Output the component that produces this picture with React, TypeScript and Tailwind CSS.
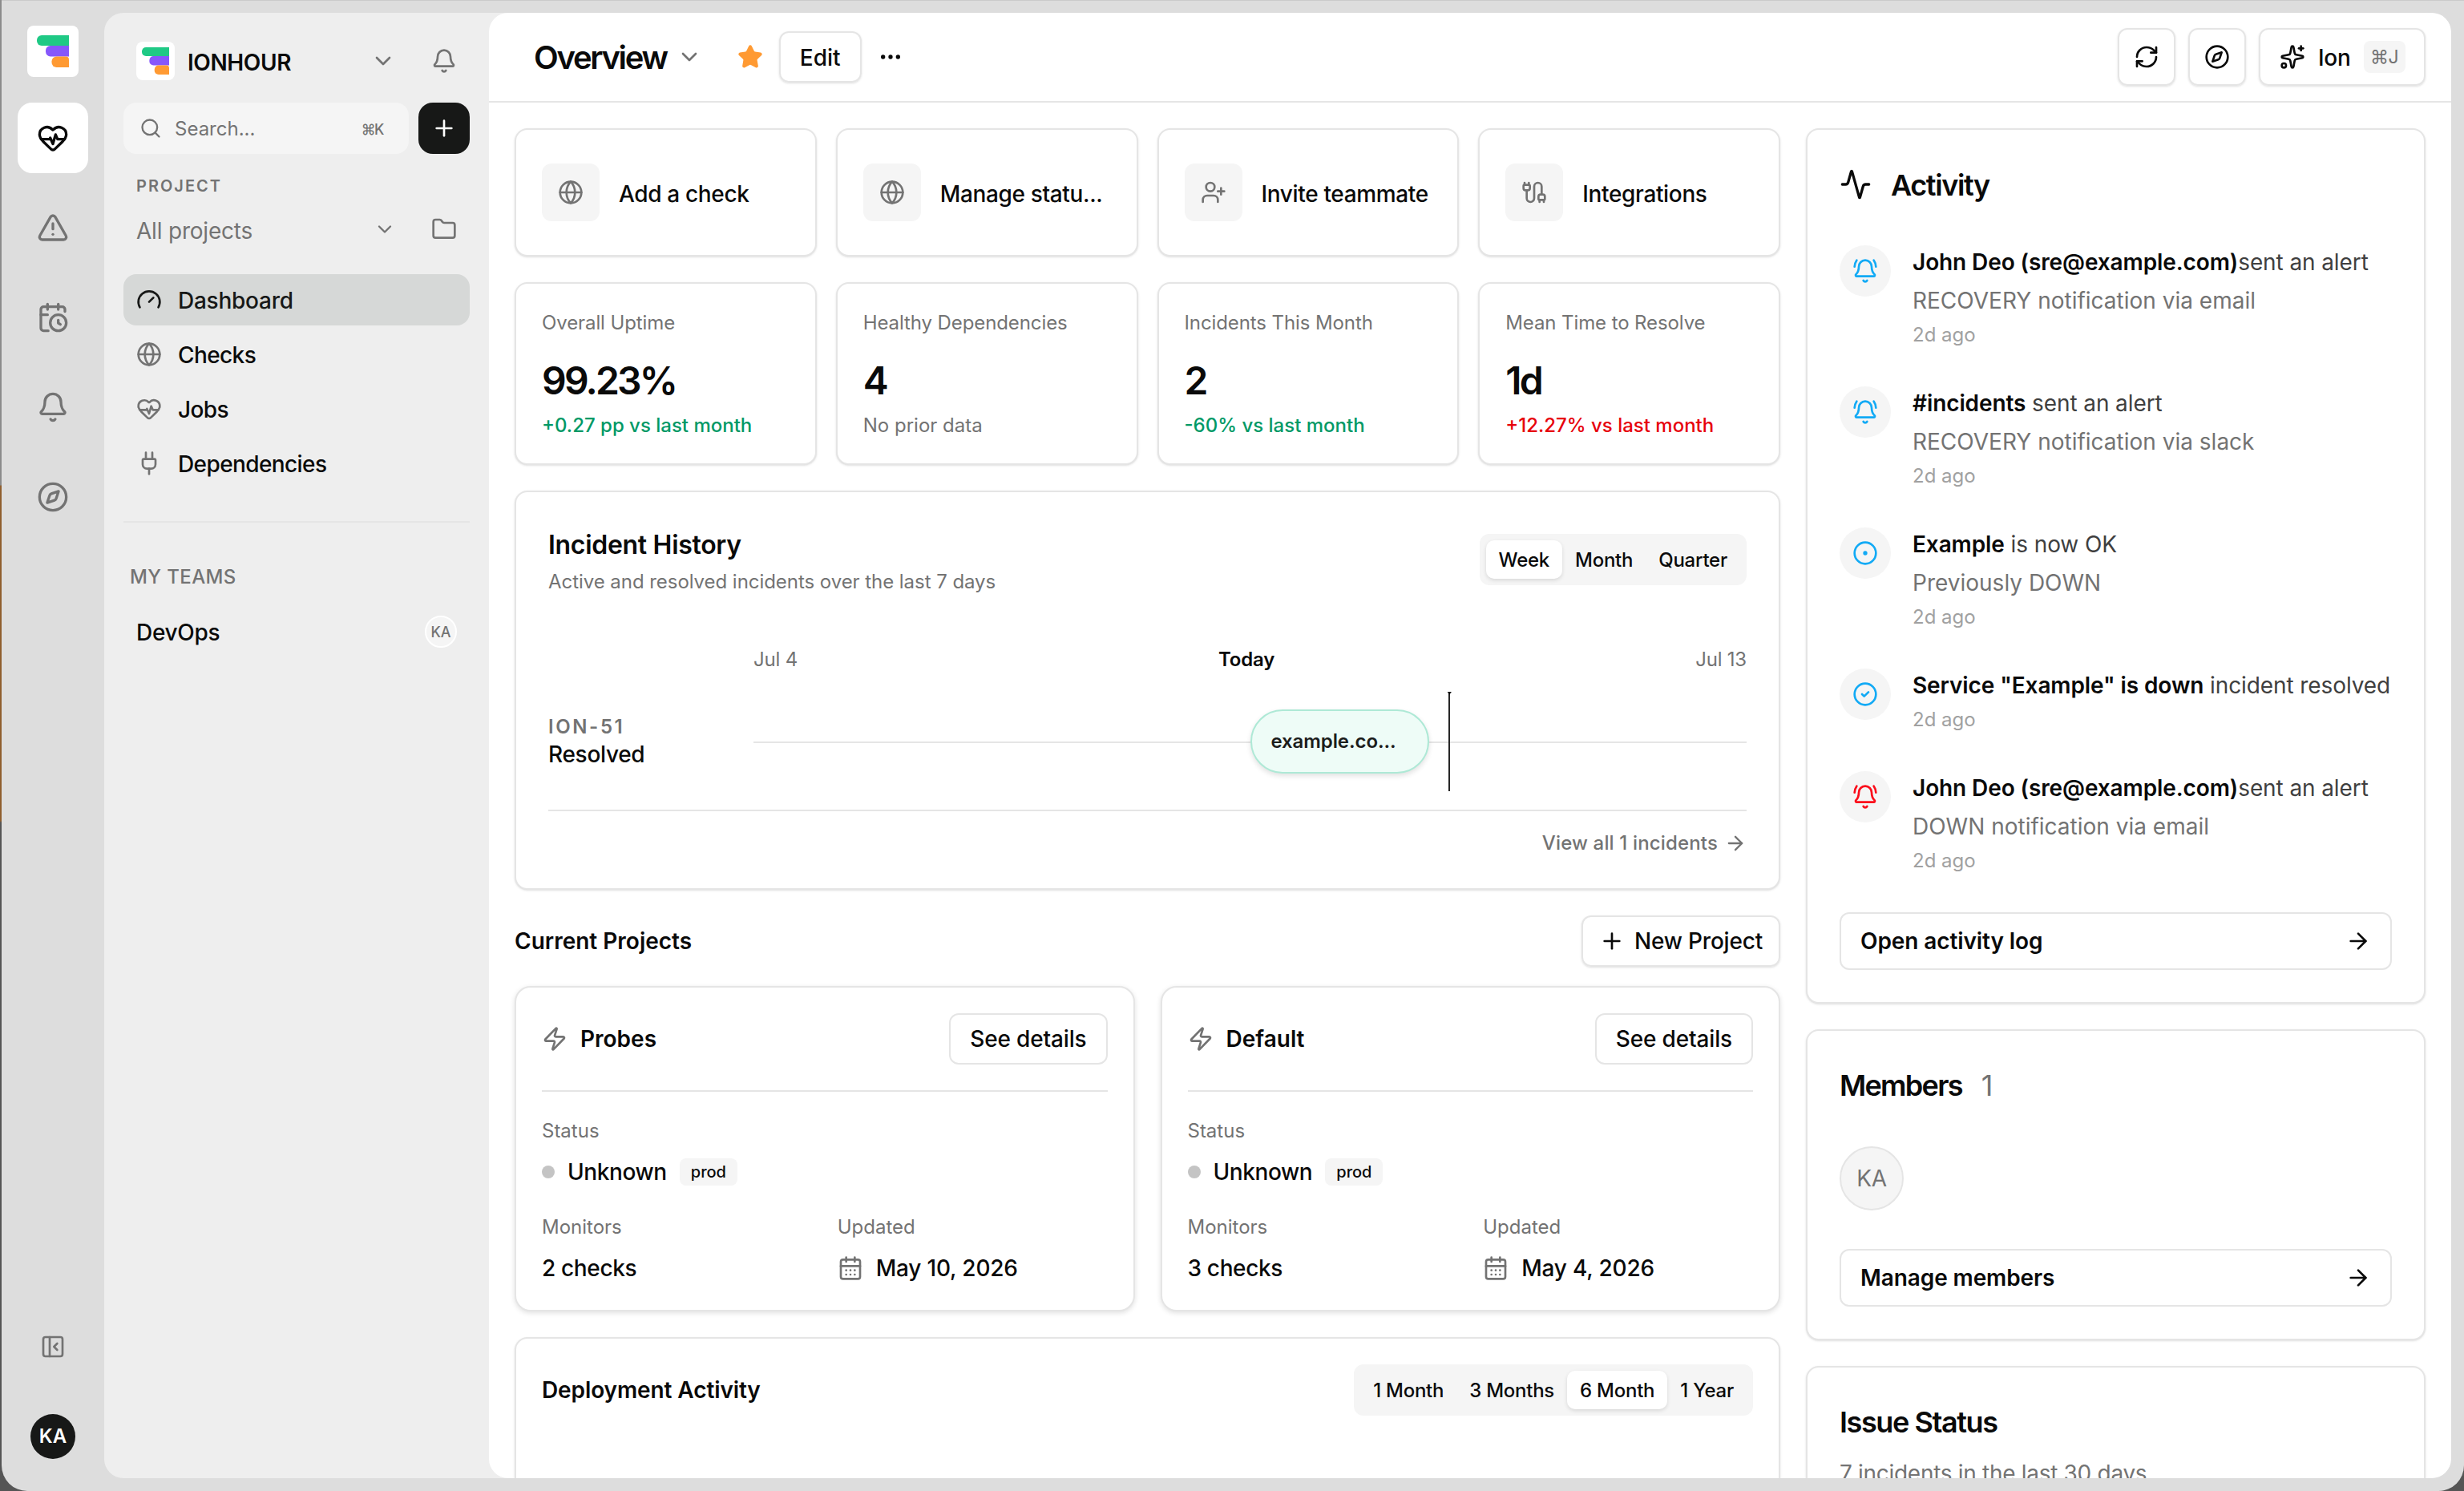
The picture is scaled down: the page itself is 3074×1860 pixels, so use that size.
import React from 'react';
import {
  Activity,
  ArrowRight,
  Bell,
  BellRing,
  Cable,
  CalendarClock,
  CalendarDays,
  ChevronDown,
  CircleCheck,
  CircleDot,
  Compass,
  Ellipsis,
  Folder,
  Gauge,
  Globe,
  HeartPulse,
  PanelLeftClose,
  Plug,
  Plus,
  RefreshCw,
  Search,
  Sparkles,
  Star,
  TriangleAlert,
  UserPlus,
  Zap,
  type LucideIcon,
} from 'lucide-react';

const Logo: React.FC<{ className: string }> = ({ className }) => (
  <svg className={className} viewBox="0 0 40 40">
    <path d="M6 0H40V13H6A6 6 0 0 1 0 7V6A6 6 0 0 1 6 0Z" fill="#1fc985" />
    <path d="M17 13H40V26.5H17A6 6 0 0 1 11 20.5V19A6 6 0 0 1 17 13Z" fill="#8657fb" />
    <path d="M24.500 26.500H36A4 4 0 0 1 40 30.500V40H24.500A6 6 0 0 1 18.500 34V32.500A6 6 0 0 1 24.500 26.500Z" fill="#ff9a33" />
  </svg>
);

// Narrow icon rail on the far left
const railIcons: LucideIcon[] = [TriangleAlert, CalendarClock, Bell, Compass];

const Rail: React.FC = () => (
  <nav className="flex w-[128px] shrink-0 flex-col items-center pt-[31px] pb-10">
    <div className="flex size-16 items-center justify-center rounded-lg bg-white">
      <Logo className="size-10" />
    </div>
    <div className="mt-8 flex flex-col gap-6">
      <div className="flex size-[88px] items-center justify-center rounded-[18px] bg-white">
        <HeartPulse className="size-10 text-neutral-950" />
      </div>
      {railIcons.map((Icon, i) => (
        <div key={i} className="flex size-[88px] items-center justify-center">
          <Icon className="size-10 text-[#737373]" />
        </div>
      ))}
    </div>
    <PanelLeftClose className="mt-auto size-8 text-[#737373]" />
    <div className="mt-[68px] flex size-14 items-center justify-center rounded-full bg-[#171817] text-[24px] font-semibold text-white">
      KA
    </div>
  </nav>
);

const navItems: { label: string; icon: LucideIcon; active?: boolean }[] = [
  { label: 'Dashboard', icon: Gauge, active: true },
  { label: 'Checks', icon: Globe },
  { label: 'Jobs', icon: HeartPulse },
  { label: 'Dependencies', icon: Plug },
];

const Sidebar: React.FC = () => (
  <aside className="w-[480px] shrink-0 px-6">
    <div className="mt-9 flex h-12 items-center pl-4 pr-4">
      <div className="flex size-12 items-center justify-center rounded-lg bg-white">
        <Logo className="size-[34px]" />
      </div>
      <span className="ml-4 pt-[3px] text-[28px] font-semibold tracking-[-0.4px] text-neutral-950">IONHOUR</span>
      <ChevronDown className="ml-auto size-8 text-[#737373]" />
      <Bell className="ml-11 size-8 text-[#737373]" />
    </div>

    <div className="mt-7 flex gap-3">
      <div className="flex h-16 flex-1 items-center rounded-2xl bg-neutral-100 pl-5 pr-8 text-[#737373]">
        <Search className="size-7" />
        <span className="ml-4 pt-[2px] text-[24px]">Search...</span>
        <span className="ml-auto pt-[2px] text-[18px] font-medium tracking-[-1.5px]">⌘K</span>
      </div>
      <button className="flex size-16 items-center justify-center rounded-[18px] bg-[#171817]">
        <Plus className="size-8 text-white" />
      </button>
    </div>

    <div className="mt-6 pl-4 text-[20px] leading-8 font-semibold tracking-[2px] text-[#737373]">PROJECT</div>
    <div className="mt-[14px] flex h-12 items-center pl-4 pr-4">
      <span className="pt-[3px] text-[28px] tracking-[-0.2px] text-[#737373]">All projects</span>
      <ChevronDown className="ml-auto size-7 text-[#737373]" />
      <Folder className="ml-11 size-8 text-[#737373]" />
    </div>

    <div className="mt-8 flex flex-col gap-1">
      {navItems.map(({ label, icon: Icon, active }) => (
        <div
          key={label}
          className={`flex h-16 items-center gap-5 rounded-2xl pl-4 text-[28px] font-medium ${
            active ? 'bg-[#d6d8d7] tracking-[-0.25px] text-[#171817]' : 'tracking-[-0.6px] text-neutral-950'
          }`}
        >
          <Icon className={active ? 'size-8' : 'size-8 text-[#737373]'} />
          <span className="pt-[2px]">{label}</span>
        </div>
      ))}
    </div>

    <div className="mt-10 h-[2px] bg-neutral-200" />

    <div className="mt-[52px] pl-2 text-[24px] leading-8 font-medium tracking-[0.4px] text-[#737373]">MY TEAMS</div>
    <div className="mt-7 flex h-12 items-center justify-between pl-4 pr-4">
      <span className="pt-[2px] text-[28px] font-medium tracking-[-0.3px] text-neutral-950">DevOps</span>
      <div className="flex size-10 items-center justify-center rounded-full border-2 border-white bg-neutral-100 text-[18px] font-medium text-[#737373]">
        KA
      </div>
    </div>
  </aside>
);

const Header: React.FC = () => (
  <header className="flex h-[112px] shrink-0 items-center border-b-2 border-neutral-200 pl-14 pr-8 text-neutral-950">
    <h1 className="pt-[2px] text-[40px] font-semibold tracking-[-2.3px]">Overview</h1>
    <ChevronDown className="ml-3 size-8 text-[#737373]" />
    <Star className="ml-11 size-8 fill-[#ff9a33] text-[#ff9a33]" />
    <button className="ml-5 h-16 rounded-xl border-2 border-neutral-200 px-6 pt-[2px] text-[28px] font-medium shadow-sm">
      Edit
    </button>
    <Ellipsis className="ml-5 size-8" />
    <div className="ml-auto flex gap-4">
      <button className="flex size-[72px] items-center justify-center rounded-xl border-2 border-neutral-200 shadow-sm">
        <RefreshCw className="size-8" />
      </button>
      <button className="flex size-[72px] items-center justify-center rounded-xl border-2 border-neutral-200 shadow-sm">
        <Compass className="size-8" />
      </button>
      <button className="flex h-[72px] w-[208px] items-center rounded-xl border-2 border-neutral-200 pl-6 shadow-sm">
        <Sparkles className="size-8" />
        <span className="ml-4 pt-[2px] text-[28px] font-medium tracking-[-0.3px]">Ion</span>
        <span className="ml-4 flex h-10 w-[52px] items-center justify-center rounded-lg bg-neutral-100 text-[23px] tracking-[-0.5px] text-[#737373]">
          ⌘J
        </span>
      </button>
    </div>
  </header>
);

const Card: React.FC<{ className?: string; children: React.ReactNode }> = ({ className = '', children }) => (
  <section className={`rounded-2xl border-2 border-neutral-200 bg-white shadow-sm ${className}`}>{children}</section>
);

const quickActions: { label: string; icon: LucideIcon }[] = [
  { label: 'Add a check', icon: Globe },
  { label: 'Manage statu...', icon: Globe },
  { label: 'Invite teammate', icon: UserPlus },
  { label: 'Integrations', icon: Cable },
];

const stats = [
  { label: 'Overall Uptime', value: '99.23%', note: '+0.27 pp vs last month', tone: 'font-medium text-emerald-600' },
  { label: 'Healthy Dependencies', value: '4', note: 'No prior data', tone: 'text-[#737373]' },
  { label: 'Incidents This Month', value: '2', note: '-60% vs last month', tone: 'font-medium text-emerald-600' },
  { label: 'Mean Time to Resolve', value: '1d', note: '+12.27% vs last month', tone: 'font-medium text-red-600' },
];

const Segmented: React.FC<{ items: string[]; active: string }> = ({ items, active }) => (
  <div className="flex h-16 items-center rounded-xl bg-neutral-100 px-2 text-[24px] font-medium tracking-[-0.25px] text-neutral-950">
    {items.map((item) => (
      <div
        key={item}
        className={`flex h-12 items-center px-4 pt-px ${item === active ? 'rounded-[10px] bg-white shadow-[0_2px_5px_rgba(0,0,0,0.12)]' : ''}`}
      >
        {item}
      </div>
    ))}
  </div>
);

const IncidentHistory: React.FC = () => (
  <Card className="p-10">
    <div className="flex items-center justify-between">
      <div className="pt-[2px]">
        <h2 className="text-[32px] leading-[48px] font-semibold tracking-[-0.3px]">Incident History</h2>
        <p className="mt-[6px] text-[24px] leading-8 tracking-[-0.05px] text-[#737373]">
          Active and resolved incidents over the last 7 days
        </p>
      </div>
      <Segmented items={['Week', 'Month', 'Quarter']} active="Week" />
    </div>

    <div className="mt-[65px] flex justify-between pl-64 text-[24px] leading-8 tracking-[-0.2px] text-[#737373]">
      <span>Jul 4</span>
      <span className="font-semibold text-neutral-950">Today</span>
      <span>Jul 13</span>
    </div>

    <div className="flex h-[171px] items-center">
      <div className="w-64 shrink-0">
        <div className="text-[24px] leading-8 font-semibold tracking-[2.6px] text-[#737373]">ION-51</div>
        <div className="text-[28px] leading-9 font-medium tracking-[-0.3px]">Resolved</div>
      </div>
      {/* Timeline track with the incident pill and the "now" marker on top */}
      <div className="relative h-20 flex-1">
        <div className="absolute inset-x-0 top-10 h-[2px] bg-neutral-200" />
        <div className="absolute left-1/2 top-0 flex h-20 w-[223px] items-center rounded-full border-2 border-[#aee9d6] bg-[#eefcf7] px-6 text-[24px] font-semibold tracking-[-0.1px] text-[#1c1d1c] shadow-[0_3px_6px_rgba(0,0,0,0.12)]">
          example.co...
        </div>
        <div className="absolute -top-5 left-[70%] h-[122px] w-[2px] bg-neutral-800" />
        <div className="absolute -top-[22px] left-[70%] -ml-[2px] h-1 w-[6px] bg-neutral-950 [clip-path:polygon(0_0,100%_0,50%_100%)]" />
      </div>
    </div>

    <div className="flex items-center justify-end gap-2 border-t-2 border-neutral-200 pt-6 text-[24px] leading-8 font-medium tracking-[0.15px] text-[#737373]">
      View all 1 incidents
      <ArrowRight className="size-7" />
    </div>
  </Card>
);

const ProjectCard: React.FC<{ name: string; checks: string; updated: string }> = ({ name, checks, updated }) => (
  <section className="rounded-[20px] border-2 border-neutral-200 bg-white p-8 shadow-[0_2px_6px_rgba(0,0,0,0.12)]">
    <div className="flex items-center border-b-2 border-neutral-200 pb-8">
      <Zap className="size-8 text-[#737373]" />
      <h3 className="ml-4 text-[28px] font-semibold">{name}</h3>
      <button className="ml-auto h-16 rounded-xl border-2 border-neutral-200 px-6 text-[28px] font-medium tracking-[-0.15px]">
        See details
      </button>
    </div>
    <div className="mt-[33px] text-[24px] leading-8 text-[#737373]">Status</div>
    <div className="mt-[15px] flex h-10 items-center gap-4">
      <span className="size-4 rounded-full bg-[#c4c4c4]" />
      <span className="text-[28px] font-medium tracking-[-0.4px]">Unknown</span>
      <span className="flex h-[34px] items-center rounded-lg bg-neutral-100 px-[14px] text-[20px] font-medium">prod</span>
    </div>
    <div className="mt-[33px] grid grid-cols-2 gap-8">
      <div>
        <div className="text-[24px] leading-8 text-[#737373]">Monitors</div>
        <div className="mt-[15px] text-[28px] leading-10 font-medium tracking-[-0.35px]">{checks}</div>
      </div>
      <div>
        <div className="text-[24px] leading-8 text-[#737373]">Updated</div>
        <div className="mt-[15px] flex items-center gap-4 text-[28px] leading-10 font-medium tracking-[-0.2px]">
          <CalendarDays className="size-8 text-[#737373]" />
          {updated}
        </div>
      </div>
    </div>
  </section>
);

const feed: { icon: LucideIcon; color: string; who: string; what: string; detail?: string }[] = [
  { icon: BellRing, color: 'text-[#12aaf5]', who: 'John Deo (sre@example.com)', what: 'sent an alert', detail: 'RECOVERY notification via email' },
  { icon: BellRing, color: 'text-[#12aaf5]', who: '#incidents', what: ' sent an alert', detail: 'RECOVERY notification via slack' },
  { icon: CircleDot, color: 'text-[#12aaf5]', who: 'Example', what: ' is now OK', detail: 'Previously DOWN' },
  { icon: CircleCheck, color: 'text-[#12aaf5]', who: 'Service "Example" is down', what: ' incident resolved' },
  { icon: BellRing, color: 'text-[#fb0d1b]', who: 'John Deo (sre@example.com)', what: 'sent an alert', detail: 'DOWN notification via email' },
];

const LinkButton: React.FC<{ label: string }> = ({ label }) => (
  <button className="mt-12 flex h-[72px] w-full items-center justify-between rounded-xl border-2 border-neutral-200 px-6 text-[28px] font-semibold tracking-[-0.1px]">
    {label}
    <ArrowRight className="size-8" />
  </button>
);

const SideColumn: React.FC = () => (
  <div className="flex w-[773px] flex-col gap-8">
    <Card className="p-10">
      <div className="flex h-14 items-center gap-6">
        <Activity className="size-10" />
        <h2 className="pt-[2px] text-[36px] font-semibold tracking-[-1.4px]">Activity</h2>
      </div>
      <div className="mt-12 flex flex-col gap-12">
        {feed.map(({ icon: Icon, color, who, what, detail }, i) => (
          <div key={i} className="flex gap-[27px]">
            <div className="flex size-16 shrink-0 items-center justify-center rounded-full bg-neutral-100">
              <Icon className={`size-8 ${color}`} />
            </div>
            <div className="pt-px whitespace-nowrap">
              <div className="text-[28px] leading-10 tracking-[-0.1px] whitespace-pre text-[#3f3f3f]">
                <span className="font-semibold text-neutral-950">{who}</span>
                {what}
              </div>
              {detail && <div className="mt-2 text-[28px] leading-10 text-[#737373]">{detail}</div>}
              <div className="mt-[7px] text-[24px] leading-8 text-[#a1a1a1]">2d ago</div>
            </div>
          </div>
        ))}
      </div>
      <LinkButton label="Open activity log" />
    </Card>

    <Card className="p-10">
      <div className="flex h-14 items-center gap-6 text-[36px]">
        <h2 className="font-semibold tracking-[-1.7px]">Members</h2>
        <span className="text-[#737373]">1</span>
      </div>
      <div className="mt-12 flex size-20 items-center justify-center rounded-full border-2 border-neutral-200 bg-neutral-100 text-[28px] tracking-[-0.3px] text-[#737373]">
        KA
      </div>
      <LinkButton label="Manage members" />
    </Card>

    <Card className="p-10">
      <h2 className="text-[36px] leading-[56px] font-semibold tracking-[-1.4px]">Issue Status</h2>
      <p className="mt-4 text-[28px] leading-10 tracking-[-0.3px] text-[#737373]">7 incidents in the last 30 days</p>
    </Card>
  </div>
);

const Overview: React.FC = () => (
  <div className="flex items-start justify-between p-8 text-neutral-950">
    <div className="flex w-[1579px] flex-col gap-8">
      <div className="grid grid-cols-4 gap-6">
        {quickActions.map(({ label, icon: Icon }) => (
          <Card key={label} className="flex h-[160px] items-center gap-6 px-8">
            <div className="flex size-[72px] shrink-0 items-center justify-center rounded-xl bg-neutral-100">
              <Icon className="size-8 text-[#737373]" />
            </div>
            <span className="pt-[3px] text-[28px] font-medium tracking-[-0.35px] whitespace-nowrap">{label}</span>
          </Card>
        ))}
      </div>

      <div className="grid grid-cols-4 gap-6">
        {stats.map(({ label, value, note, tone }) => (
          <Card key={label} className="px-8 pt-[33px] pb-[31px]">
            <div className="text-[24px] leading-8 tracking-[-0.1px] text-[#737373]">{label}</div>
            <div className="mt-8 text-[48px] leading-[48px] font-semibold tracking-[-2.8px]">{value}</div>
            <div className={`mt-4 text-[24px] leading-8 ${tone}`}>{note}</div>
          </Card>
        ))}
      </div>

      <IncidentHistory />

      <div>
        <div className="flex items-center justify-between">
          <h2 className="text-[28px] font-semibold">Current Projects</h2>
          <button className="flex h-16 items-center gap-3 rounded-xl border-2 border-neutral-200 px-5 text-[28px] font-medium tracking-[-0.2px] shadow-sm">
            <Plus className="size-8" />
            New Project
          </button>
        </div>
        <div className="mt-6 grid grid-cols-2 gap-8">
          <ProjectCard name="Probes" checks="2 checks" updated="May 10, 2026" />
          <ProjectCard name="Default" checks="3 checks" updated="May 4, 2026" />
        </div>
      </div>

      <Card className="h-[400px] p-8">
        <div className="flex items-center justify-between">
          <h2 className="text-[28px] font-semibold tracking-[-0.1px]">Deployment Activity</h2>
          <Segmented items={['1 Month', '3 Months', '6 Month', '1 Year']} active="6 Month" />
        </div>
      </Card>
    </div>
    <SideColumn />
  </div>
);

const App: React.FC = () => (
  <div className="h-[1860px] w-[3074px] overflow-hidden bg-[linear-gradient(#8c8c8c_605px,#8f5f2e_606px,#8f5f2e_1024px,#555_1026px)] pl-[2px] font-['Inter',sans-serif]">
    <div className="flex h-full overflow-hidden rounded-b-[32px] border-t border-[#cbcbcb] bg-[#dddddd] pr-4">
      <Rail />
      {/* The sidebar panel runs underneath the rounded corners of the main panel */}
      <div className="mt-[15px] flex h-[1828px] min-w-0 flex-1 overflow-hidden rounded-3xl bg-[#eeeeee]">
        <Sidebar />
        <main className="flex min-w-0 flex-1 flex-col overflow-hidden rounded-3xl bg-white">
          <Header />
          <Overview />
        </main>
      </div>
    </div>
  </div>
);

export default App;
